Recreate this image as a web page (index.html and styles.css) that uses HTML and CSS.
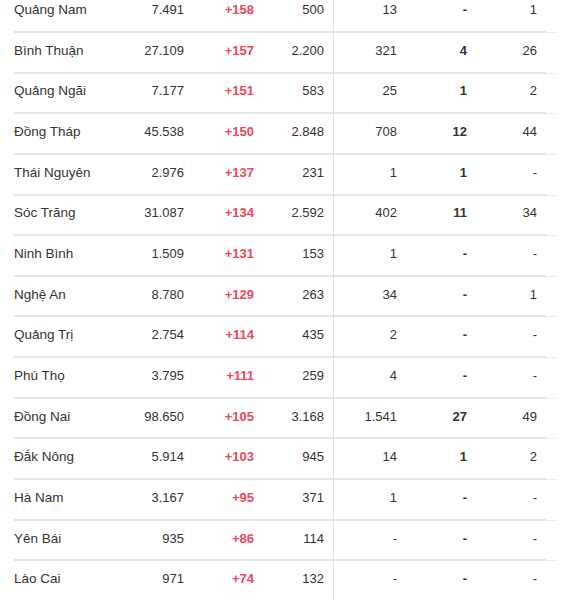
FILE: index.html
```html
<!DOCTYPE html>
<html lang="vi">
<head>
<meta charset="utf-8">
<title>Bảng số liệu</title>
<link rel="stylesheet" href="styles.css">
</head>
<body>
<div class="table">
  <div class="row"><div class="c name">Quảng Nam</div><div class="c">7.491</div><div class="c inc">+158</div><div class="c sep">500</div><div class="c">13</div><div class="c bold">-</div><div class="c">1</div><div class="tail"></div></div>
  <div class="row"><div class="c name">Bình Thuận</div><div class="c">27.109</div><div class="c inc">+157</div><div class="c sep">2.200</div><div class="c">321</div><div class="c bold">4</div><div class="c">26</div><div class="tail"></div></div>
  <div class="row"><div class="c name">Quảng Ngãi</div><div class="c">7.177</div><div class="c inc">+151</div><div class="c sep">583</div><div class="c">25</div><div class="c bold">1</div><div class="c">2</div><div class="tail"></div></div>
  <div class="row"><div class="c name">Đồng Tháp</div><div class="c">45.538</div><div class="c inc">+150</div><div class="c sep">2.848</div><div class="c">708</div><div class="c bold">12</div><div class="c">44</div><div class="tail"></div></div>
  <div class="row"><div class="c name">Thái Nguyên</div><div class="c">2.976</div><div class="c inc">+137</div><div class="c sep">231</div><div class="c">1</div><div class="c bold">1</div><div class="c">-</div><div class="tail"></div></div>
  <div class="row"><div class="c name">Sóc Trăng</div><div class="c">31.087</div><div class="c inc">+134</div><div class="c sep">2.592</div><div class="c">402</div><div class="c bold">11</div><div class="c">34</div><div class="tail"></div></div>
  <div class="row"><div class="c name">Ninh Bình</div><div class="c">1.509</div><div class="c inc">+131</div><div class="c sep">153</div><div class="c">1</div><div class="c bold">-</div><div class="c">-</div><div class="tail"></div></div>
  <div class="row"><div class="c name">Nghệ An</div><div class="c">8.780</div><div class="c inc">+129</div><div class="c sep">263</div><div class="c">34</div><div class="c bold">-</div><div class="c">1</div><div class="tail"></div></div>
  <div class="row"><div class="c name">Quảng Trị</div><div class="c">2.754</div><div class="c inc">+114</div><div class="c sep">435</div><div class="c">2</div><div class="c bold">-</div><div class="c">-</div><div class="tail"></div></div>
  <div class="row"><div class="c name">Phú Thọ</div><div class="c">3.795</div><div class="c inc">+111</div><div class="c sep">259</div><div class="c">4</div><div class="c bold">-</div><div class="c">-</div><div class="tail"></div></div>
  <div class="row"><div class="c name">Đồng Nai</div><div class="c">98.650</div><div class="c inc">+105</div><div class="c sep">3.168</div><div class="c">1.541</div><div class="c bold">27</div><div class="c">49</div><div class="tail"></div></div>
  <div class="row"><div class="c name">Đắk Nông</div><div class="c">5.914</div><div class="c inc">+103</div><div class="c sep">945</div><div class="c">14</div><div class="c bold">1</div><div class="c">2</div><div class="tail"></div></div>
  <div class="row"><div class="c name">Hà Nam</div><div class="c">3.167</div><div class="c inc">+95</div><div class="c sep">371</div><div class="c">1</div><div class="c bold">-</div><div class="c">-</div><div class="tail"></div></div>
  <div class="row"><div class="c name">Yên Bái</div><div class="c">935</div><div class="c inc">+86</div><div class="c sep">114</div><div class="c">-</div><div class="c bold">-</div><div class="c">-</div><div class="tail"></div></div>
  <div class="row"><div class="c name">Lào Cai</div><div class="c">971</div><div class="c inc">+74</div><div class="c sep">132</div><div class="c">-</div><div class="c bold">-</div><div class="c">-</div><div class="tail"></div></div>
</div>
</body>
</html>
```
FILE: styles.css
```css
html, body {
  margin: 0;
  padding: 0;
  background: #fff;
}
body {
  font-family: "Liberation Sans", Arial, sans-serif;
  font-size: 13px;
  color: #333;
  overflow: hidden;
}
.table {
  margin: -7.65px 0 0 14px;
}
.row {
  display: grid;
  grid-template-columns: 109px 70px 70px 71px 72px 70px 70px 11px;
  height: 40.65px;
}
.c {
  box-sizing: border-box;
  display: flex;
  align-items: center;
  justify-content: flex-end;
  padding: 0 9px 4px 0;
  border-bottom: 2px solid #e6e6e6;
  white-space: nowrap;
}
.c.name {
  justify-content: flex-start;
  font-size: 13.5px;
}
.c.inc {
  color: #f0465a;
  font-weight: bold;
}
.c.bold {
  font-weight: bold;
}
.c.sep {
  border-right: 1px solid #e3e3e3;
}
.tail {
  border-bottom: 1px solid #efefef;
}
```
